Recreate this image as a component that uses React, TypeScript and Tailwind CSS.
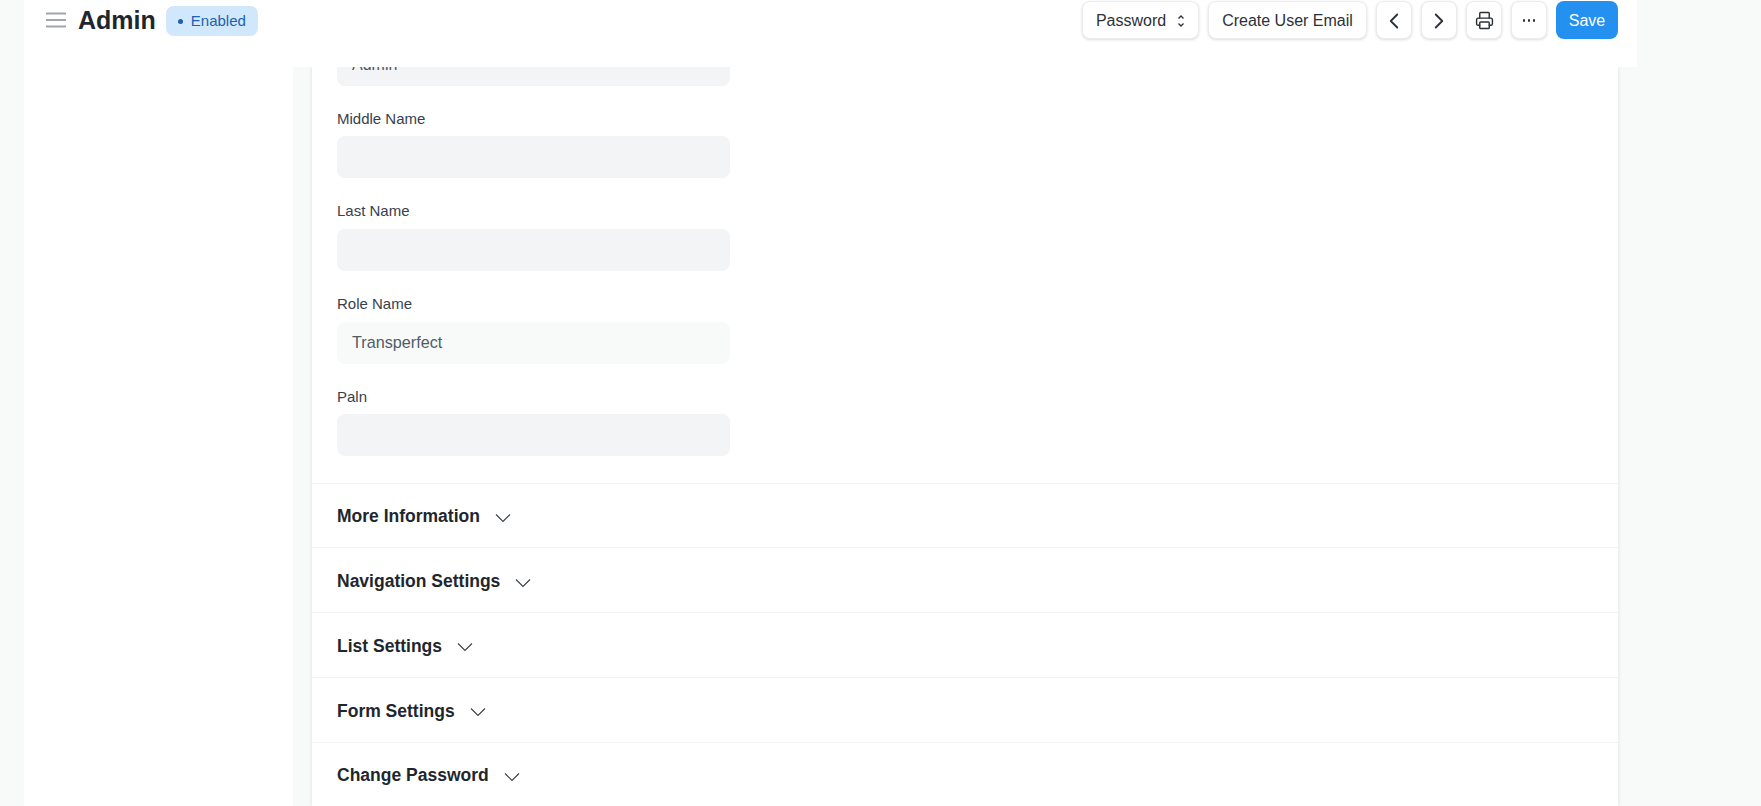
import { ChevronLeft, ChevronRight, Printer } from 'lucide-react';

const fields = [
  { label: 'Middle Name', value: '' },
  { label: 'Last Name', value: '' },
  { label: 'Role Name', value: 'Transperfect' },
  { label: 'Paln', value: '' },
];

const sections = ['More Information', 'Navigation Settings', 'List Settings', 'Form Settings', 'Change Password'];

const btn = 'flex h-[38px] items-center justify-center rounded-lg border border-[#ebecee] bg-white pt-px text-[16px] text-[#2c3138] shadow-[0_1px_3px_rgba(0,0,0,0.14)]';

function Chevron() {
  return (
    <svg className="mt-[3px]" width="16" height="10" viewBox="0 0 16 10" fill="none" stroke="#383f47" strokeWidth="1.1">
      <path d="M1 1.5 L8 8.5 L15 1.5" />
    </svg>
  );
}

export default function App() {
  return (
    <div className="flex h-[806px] flex-col overflow-hidden bg-[#f8faf9] font-['Liberation_Sans',Arial,sans-serif]">
      {/* Page head */}
      <header className="z-10 ml-6 flex h-[67px] w-[1613px] shrink-0 items-start justify-between bg-white pl-[22px] pr-[19px]">
        <div className="flex items-start">
          <svg className="mt-3" width="20" height="16" viewBox="0 0 20 16" fill="none" stroke="#a2a7ad" strokeWidth="2">
            <path d="M0 1.5H20M0 8H20M0 14.5H20" />
          </svg>
          <h1 className="ml-3 mt-[3px] text-[25px] font-bold leading-[34px] text-[#1f272e]">Admin</h1>
          <span className="ml-[10px] mt-[6px] flex h-[30px] w-[92px] items-center rounded-lg bg-[#d1e8fc] pl-3 text-[15px] text-[#1a62ad]">
            <span className="mr-2 size-[5px] rounded-full bg-[#1a62ad]" />
            Enabled
          </span>
        </div>
        <div className="mt-px flex items-center gap-[9px]">
          <button className={`${btn} w-[117px] gap-[11px]`}>
            Password
            <svg width="8" height="14" viewBox="0 0 8 14" fill="none" stroke="#2c3138" strokeWidth="1.3">
              <path d="M1.5 4.5 L4 2 L6.5 4.5M1.5 9.5 L4 12 L6.5 9.5" />
            </svg>
          </button>
          <button className={`${btn} w-[159px] text-[16.1px]`}>Create User Email</button>
          <button className={`${btn} w-9`}>
            <ChevronLeft size={26} strokeWidth={1.7} />
          </button>
          <button className={`${btn} w-9`}>
            <ChevronRight size={26} strokeWidth={1.7} />
          </button>
          <button className={`${btn} w-9`}>
            <Printer size={19} strokeWidth={1.8} />
          </button>
          <button className={`${btn} w-9 gap-[2.5px]`}>
            <span className="size-[2.5px] rounded-full bg-[#2c3138]" />
            <span className="size-[2.5px] rounded-full bg-[#2c3138]" />
            <span className="size-[2.5px] rounded-full bg-[#2c3138]" />
          </button>
          <button className="flex h-[38px] w-[62px] items-center justify-center rounded-lg bg-[#2490ef] pt-px text-[16px] text-white">Save</button>
        </div>
      </header>

      <div className="ml-6 flex min-h-0 flex-1">
        {/* Sidebar */}
        <div className="w-[269px] shrink-0 bg-white" />

        {/* Form card */}
        <main className="ml-[19px] w-[1306px] shrink-0 overflow-hidden bg-white shadow-[0_0_4px_rgba(0,0,0,0.12)]">
          <div className="px-[25px] pb-[26.37px]">
            <div className="-mt-[23px] flex h-[42px] w-[393px] items-center rounded-lg bg-[#f3f4f6] px-[15px] text-[16px] text-[#4c5a67]">Admin</div>
            {fields.map((field, i) => (
              <div key={field.label} className={`w-[393px] ${i === 0 ? 'mt-[22.63px]' : 'mt-[23px]'}`}>
                <label className="block h-[27.67px] text-[15px] leading-5 text-[#36414c]">{field.label}</label>
                <div className={`flex h-[42px] items-center rounded-lg px-[15px] text-[16.2px] text-[#525c66] ${field.value ? 'bg-[#f8faf9]' : 'bg-[#f3f4f6]'}`}>
                  {field.value}
                </div>
              </div>
            ))}
          </div>
          {sections.map((section) => (
            <section key={section} className="flex h-[64.75px] items-center gap-[15px] border-t border-[#f0f2f4] px-[25px] pt-[2px]">
              <h2 className="text-[17.5px] font-bold text-[#1f272e]">{section}</h2>
              <Chevron />
            </section>
          ))}
        </main>
      </div>
    </div>
  );
}
